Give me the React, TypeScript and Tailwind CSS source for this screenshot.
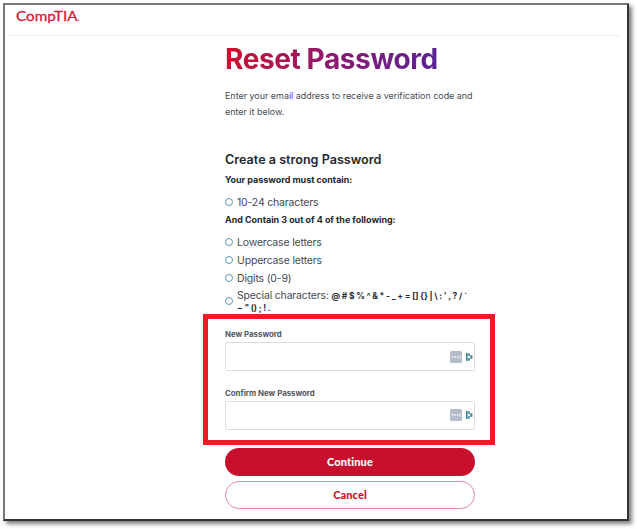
import React from 'react';

const Bullet: React.FC = () => (
  <span className="w-[8px] h-[8px] rounded-full border-[1.2px] border-[#5d9ab3] bg-white flex-shrink-0" />
);

const Rule: React.FC<{ text: string; className: string }> = ({ text, className }) => (
  <li className={`flex items-center gap-[4px] ${className}`}>
    <Bullet />
    <span className="whitespace-nowrap pt-[2px]">{text}</span>
  </li>
);

const PasswordField: React.FC<{ label: string }> = ({ label }) => (
  <div>
    <label className="block h-[14px] leading-[14px] text-[7.85px] font-bold text-[#50555b] whitespace-nowrap">{label}</label>
    <div className="h-[29px] w-[250px] mt-px border border-[#dcdde2] rounded-[2px] bg-white flex items-center justify-end gap-[3px] pr-[1px]">
      <svg width="12" height="12" viewBox="0 0 12 12">
        <rect width="12" height="12" rx="1.6" fill="#b4bcca" />
        <path d="M1.8 5.3h1.4v1.4H1.8zM4.4 5.3h1.4v1.4H4.4zM7 5.3h1.4v1.4H7zM9.7 4h.8v4h-.8z" fill="#fff" />
      </svg>
      <svg width="8" height="10" viewBox="0 0 8 10">
        <path d="M1.8 1v8M4 1.2v2.2M4 6.6v2.2M6.6 3.2v3.6" stroke="#3e8594" strokeWidth="1.6" fill="none" />
        <path d="M2.6 3.2h2.6v3.6H2.6" stroke="#3e8594" strokeWidth="0.8" fill="none" />
      </svg>
    </div>
  </div>
);

const App: React.FC = () => {
  return (
    <div className="w-[637px] h-[529px] bg-white overflow-hidden pt-[3px] pl-[3px] font-['Inter',sans-serif]">
      <div className="w-[626px] h-[518px] bg-white border-2 border-t-[#777777] border-l-[#777777] border-r-[#333333] border-b-[#333333] shadow-[3px_3px_4px_rgba(0,0,0,0.5)]">
        <header className="ml-[3px] w-[612px] h-[31px] border-b border-[#e9eeef] pl-[8px]">
          <svg width="80" height="28" viewBox="0 0 80 28">
            <text x="0" y="15.5" fontFamily="Lato, sans-serif" fontSize="14.3" fill="#d0203f" stroke="#d0203f" strokeWidth="0.3" textLength="61.5" lengthAdjust="spacingAndGlyphs">CompTIA</text>
            <circle cx="62.6" cy="15" r="0.6" fill="#d0203f" />
          </svg>
        </header>

        <main className="ml-[220px] w-[250px] pt-[7px]">
          <h1 className="w-[220px] h-[32px] leading-[32px] text-[28px] tracking-[-0.4px] font-bold whitespace-nowrap text-transparent bg-clip-text bg-[linear-gradient(100deg,#d0102a_0%,#8c1870_50%,#55239a_100%)]">
            Reset Password
          </h1>
          <p className="mt-[12.5px] text-[8.93px] leading-[16.5px] text-[#454a51] whitespace-nowrap">
            Enter your email address to receive a verification code and<br />enter it below.
          </p>

          <h2 className="mt-[31.5px] h-[16px] leading-[16px] text-[12.6px] font-semibold text-[#24282d] whitespace-nowrap">Create a strong Password</h2>
          <p className="mt-[6px] h-[12px] leading-[12px] text-[8.95px] font-bold text-[#24282d] whitespace-nowrap">Your password must contain:</p>
          <ul className="mt-[9px] text-[10.5px] tracking-[-0.18px] text-[#454a51]">
            <Rule text="10-24 characters" className="h-[14px]" />
          </ul>
          <p className="mt-[5px] h-[12px] leading-[12px] text-[8.95px] font-bold text-[#24282d] whitespace-nowrap">And Contain 3 out of 4 of the following:</p>
          <ul className="mt-[7px] text-[10.5px] tracking-[-0.18px] text-[#454a51]">
            <Rule text="Lowercase letters" className="h-[18px]" />
            <Rule text="Uppercase letters" className="h-[18px]" />
            <Rule text="Digits (0-9)" className="h-[18px]" />
            <li className="flex items-center gap-[4px] h-[28px]">
              <Bullet />
              <div className="leading-[12px] whitespace-nowrap pt-[2px]">
                Special characters: <b className="text-[8.5px] text-[#2a2e33]">{"@ # $ % ^ & * - _ + = [] {} | \\ : ' , ? / `"}</b>
                <b className="block text-[8.5px] text-[#2a2e33]">{'~ " () ; ! .'}</b>
              </div>
            </li>
          </ul>

          {/* Highlighted password inputs */}
          <section className="-mt-px -ml-[22px] w-[292px] h-[131px] border-[5px] border-[#ed1c24] pl-[17px] pt-[8px] flex flex-col gap-[14.5px]">
            <PasswordField label="New Password" />
            <PasswordField label="Confirm New Password" />
          </section>

          <div className="mt-[3px] flex flex-col gap-[5px] font-['Lato',sans-serif] text-[11px] tracking-[0.1px]">
            <button className="h-[28px] rounded-full bg-[#c8102e] text-white font-black">Continue</button>
            <button className="h-[28px] rounded-full border border-[#e58a9a] text-[#c8102e] font-black">Cancel</button>
          </div>
        </main>
      </div>
    </div>
  );
};

export default App;
